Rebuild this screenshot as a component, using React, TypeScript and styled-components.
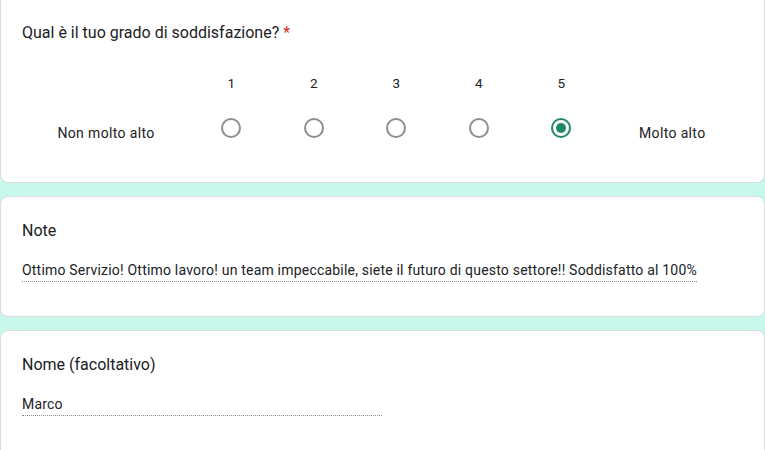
import React from "react";
import styled, { createGlobalStyle } from "styled-components";

const Global = createGlobalStyle`
  html, body { margin: 0; padding: 0; background: #c8f7eb; }
  body { font-family: Roboto, "Noto Sans", Arial, sans-serif; color: #202124; }
`;

const Page = styled.div`
  display: flex;
  flex-direction: column;
  gap: 13px;
  width: 765px;
  height: 450px;
  overflow: hidden;
`;

const Card = styled.section<{ $first?: boolean; $last?: boolean }>`
  background: #fff;
  border: 1px solid #dadce0;
  border-top: ${(p) => (p.$first ? "none" : "1px solid #dadce0")};
  border-radius: ${(p) => (p.$first ? "0 0 8px 8px" : "8px")};
  box-sizing: border-box;
  width: 765px;
  padding: ${(p) => (p.$first ? "21px" : "22px")} 22px
    ${(p) => (p.$last ? "80px" : "34px")} 21px;
  flex-shrink: 0;
`;

const Title = styled.div`
  font-size: 16px;
  line-height: 24px;
  letter-spacing: 0;
  color: #202124;
`;

const Required = styled.span`
  color: #d93025;
  margin-left: 4px;
`;

const Scale = styled.div`
  display: grid;
  grid-template-columns: 168px repeat(5, 82.5px) 1fr;
  grid-template-rows: 20px 40px;
  row-gap: 15px;
  margin-top: 28px;
`;

const Num = styled.div`
  text-align: center;
  line-height: 20px;
  font-size: 13.5px;
`;

const Cell = styled.div`
  display: flex;
  align-items: center;
  justify-content: center;
`;

const EdgeLabel = styled.div`
  text-align: center;
  line-height: 20px;
  padding-top: 15px;
  font-size: 14px;
  letter-spacing: 0.35px;
`;

const Radio = styled.span<{ $on?: boolean }>`
  width: 20px;
  height: 20px;
  box-sizing: border-box;
  border-radius: 50%;
  border: 2px solid ${(p) => (p.$on ? "#1e8968" : "#8a8d92")};
  display: flex;
  align-items: center;
  justify-content: center;
  &::after {
    content: "";
    width: 10px;
    height: 10px;
    border-radius: 50%;
    background: ${(p) => (p.$on ? "#1e8968" : "transparent")};
  }
`;

const Answer = styled.div<{ $w?: number }>`
  margin-top: 17px;
  font-size: 14px;
  letter-spacing: 0.2px;
  line-height: 20px;
  display: inline-block;
  width: ${(p) => (p.$w ? `${p.$w}px` : "auto")};
  border-bottom: 1px dotted #8a8d92;
  padding-bottom: 1px;
  align-self: flex-start;
`;

const Body = styled.div`
  display: flex;
  flex-direction: column;
`;

export default function App() {
  const nums = [1, 2, 3, 4, 5];
  return (
    <>
      <Global />
      <Page>
        <Card $first>
          <Title>
            Qual è il tuo grado di soddisfazione?<Required>*</Required>
          </Title>
          <Scale>
            <div />
            {nums.map((n) => (
              <Num key={n}>{n}</Num>
            ))}
            <div />
            <EdgeLabel>Non molto alto</EdgeLabel>
            {nums.map((n) => (
              <Cell key={n}>
                <Radio $on={n === 5} />
              </Cell>
            ))}
            <EdgeLabel>Molto alto</EdgeLabel>
          </Scale>
        </Card>
        <Card>
          <Body>
            <Title>Note</Title>
            <Answer>
              Ottimo Servizio! Ottimo lavoro! un team impeccabile, siete il futuro di questo settore!! Soddisfatto al 100%
            </Answer>
          </Body>
        </Card>
        <Card $last>
          <Body>
            <Title>Nome (facoltativo)</Title>
            <Answer $w={360}>Marco</Answer>
          </Body>
        </Card>
      </Page>
    </>
  );
}
